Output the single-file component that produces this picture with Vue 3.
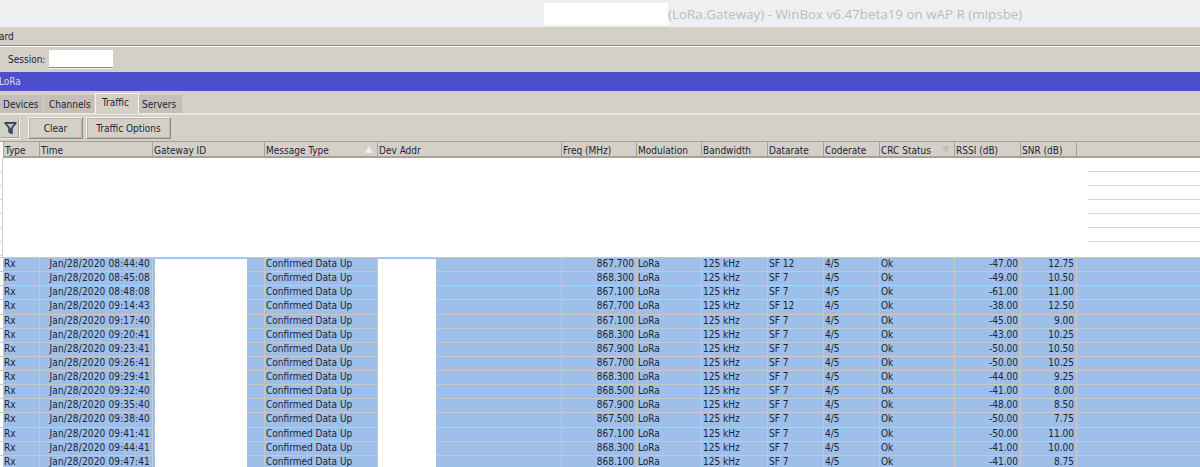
<script setup>
const columns = [
  { key: 'type', label: 'Type' },
  { key: 'time', label: 'Time', right: true },
  { key: 'gateway', label: 'Gateway ID' },
  { key: 'message', label: 'Message Type', sort: 'up' },
  { key: 'addr', label: 'Dev Addr' },
  { key: 'freq', label: 'Freq (MHz)', right: true },
  { key: 'modulation', label: 'Modulation' },
  { key: 'bandwidth', label: 'Bandwidth' },
  { key: 'datarate', label: 'Datarate' },
  { key: 'coderate', label: 'Coderate' },
  { key: 'crc', label: 'CRC Status', sort: 'down' },
  { key: 'rssi', label: 'RSSI (dB)', right: true },
  { key: 'snr', label: 'SNR (dB)', right: true },
]

const samples = [
  ['08:44:40', '867.700', 'SF 12', '-47.00', '12.75'],
  ['08:45:08', '868.300', 'SF 7', '-49.00', '10.50'],
  ['08:48:08', '867.100', 'SF 7', '-61.00', '11.00'],
  ['09:14:43', '867.700', 'SF 12', '-38.00', '12.50'],
  ['09:17:40', '867.100', 'SF 7', '-45.00', '9.00'],
  ['09:20:41', '868.300', 'SF 7', '-43.00', '10.25'],
  ['09:23:41', '867.900', 'SF 7', '-50.00', '10.50'],
  ['09:26:41', '867.700', 'SF 7', '-50.00', '10.25'],
  ['09:29:41', '868.300', 'SF 7', '-44.00', '9.25'],
  ['09:32:40', '868.500', 'SF 7', '-41.00', '8.00'],
  ['09:35:40', '867.900', 'SF 7', '-48.00', '8.50'],
  ['09:38:40', '867.500', 'SF 7', '-50.00', '7.75'],
  ['09:41:41', '867.100', 'SF 7', '-50.00', '11.00'],
  ['09:44:41', '868.300', 'SF 7', '-41.00', '10.00'],
  ['09:47:41', '868.100', 'SF 7', '-41.00', '8.75'],
]

const rows = samples.map(([time, freq, datarate, rssi, snr]) => ({
  type: 'Rx',
  time: `Jan/28/2020 ${time}`,
  gateway: '',
  message: 'Confirmed Data Up',
  addr: '',
  freq,
  modulation: 'LoRa',
  bandwidth: '125 kHz',
  datarate,
  coderate: '4/5',
  crc: 'Ok',
  rssi,
  snr,
}))

const tabs = ['Devices', 'Channels', 'Traffic', 'Servers']
</script>

<template>
  <div class="winbox">
    <header class="titlebar">
      <span class="titlebar__mask"></span>
      <span class="titlebar__text">(LoRa.Gateway) - WinBox v6.47beta19 on wAP R (mipsbe)</span>
    </header>

    <div class="menu-strip"><span>ard</span></div>

    <div class="session-bar">
      <label>Session:</label>
      <span class="session-bar__input"></span>
    </div>

    <div class="window-title"><span>LoRa</span></div>

    <nav class="tabs">
      <span
        v-for="tab in tabs"
        :key="tab"
        class="tab"
        :class="{ 'is-active': tab === 'Traffic' }"
      >{{ tab }}</span>
    </nav>

    <div class="toolbar">
      <span class="filter-btn">
        <svg width="13" height="14" viewBox="0 0 14 14">
          <path d="M1.2 1.5h11.6L8.6 6.6v6.2L5.4 11.2V6.6z" fill="#b9c0cb" stroke="#2f3f5a" stroke-width="1.7" stroke-linejoin="round" />
          <path d="M7 7v4.6" stroke="#2f3f5a" stroke-width="1" />
        </svg>
      </span>
      <button class="btn btn--clear">Clear</button>
      <button class="btn btn--options">Traffic Options</button>
    </div>

    <section class="grid">
      <div class="grid__row grid__head">
        <span class="cell-gutter"></span>
        <span v-for="col in columns" :key="col.key" class="head-cell">
          {{ col.label }}
          <i v-if="col.sort" class="sort" :class="`sort--${col.sort}`"></i>
        </span>
        <span class="head-cell"></span>
      </div>

      <div class="grid__empty">
        <div class="ticks">
          <i v-for="n in 7" :key="n"></i>
        </div>
        <div class="ghost-lines">
          <i v-for="n in 6" :key="n"></i>
        </div>
      </div>

      <div class="grid__body">
        <div v-for="(row, index) in rows" :key="index" class="grid__row grid__item">
          <span class="cell-gutter"></span>
          <span
            v-for="col in columns"
            :key="col.key"
            class="cell"
            :class="[`cell--${col.key}`, { 'cell--right': col.right }]"
          >{{ row[col.key] }}</span>
          <span class="cell"></span>
        </div>
        <span class="mask mask--gateway"></span>
        <span class="mask mask--addr"></span>
      </div>
    </section>
  </div>
</template>

<style scoped>
.winbox {
  width: 1200px;
  height: 467px;
  overflow: hidden;
  background: #d4d0c8;
  color: #1c2536;
  font-family: "DejaVu Sans Condensed", "DejaVu Sans", sans-serif;
  font-stretch: condensed;
  font-size: 10px;
}

.titlebar {
  display: flex;
  align-items: center;
  height: 27px;
  padding-left: 544px;
  box-sizing: border-box;
  background: #eeeff1;
}

.titlebar__mask {
  width: 124px;
  height: 22px;
  margin-top: 1px;
  background: #ffffff;
}

.titlebar__text {
  color: #b9bcc0;
  font-family: "Open Sans", sans-serif;
  font-stretch: normal;
  font-size: 13.4px;
  white-space: nowrap;
}

.menu-strip {
  display: flex;
  align-items: center;
  height: 19px;
  margin-left: -1px;
  box-sizing: border-box;
  border-bottom: 1px solid #8f8c86;
  box-shadow: 0 1px 0 #ffffff;
}

.session-bar {
  display: flex;
  align-items: center;
  gap: 4px;
  height: 26px;
  padding-left: 8px;
  box-sizing: border-box;
}

.session-bar label {
  width: 37px;
}

.session-bar__input {
  width: 64px;
  height: 17px;
  background: #ffffff;
  border-bottom: 1px solid #8f8c86;
  box-shadow: 0 1px 0 #f4f2ee;
}

.window-title {
  display: flex;
  align-items: center;
  height: 19px;
  background: #4d4fcc;
  color: #d8d8ee;
}

.window-title span {
  margin-left: -1px;
}

.tabs {
  display: flex;
  align-items: flex-end;
  height: 24px;
  box-sizing: border-box;
  border-bottom: 2px solid #e8e6e1;
}

.tab {
  display: flex;
  align-items: center;
  height: 18px;
  padding-top: 1px;
  box-sizing: border-box;
  border-right: 1px solid #d4d0c8;
  background: #c4c0b8;
}

.tab:nth-child(1) {
  width: 44px;
  padding-left: 3px;
}

.tab:nth-child(2) {
  width: 51px;
  padding-left: 5px;
}

.tab:nth-child(4) {
  width: 44px;
  padding-left: 3px;
}

.tab.is-active {
  width: 44px;
  height: 21px;
  margin-bottom: -1px;
  padding: 0 0 3px 6px;
  border: 1px solid #f4f2ee;
  border-bottom: 0;
  background: #d4d0c8;
}

.toolbar {
  display: flex;
  align-items: center;
  gap: 3px;
  height: 26px;
  box-sizing: border-box;
}

.filter-btn {
  display: flex;
  align-items: center;
  justify-content: center;
  width: 20px;
  height: 22px;
  margin-right: 5px;
  box-sizing: border-box;
  border: 1px solid;
  border-color: transparent #f4f2ee #f4f2ee transparent;
  box-shadow: inset -1px -1px 0 #a5a29b;
}

.btn {
  height: 22px;
  padding: 0;
  box-sizing: border-box;
  border: 1px solid;
  border-color: #f4f2ee #8f8c86 #8f8c86 #f4f2ee;
  outline: 1px solid #bab6ae;
  outline-offset: -2px;
  background: #d4d0c8;
  color: inherit;
  font: inherit;
}

.btn--clear {
  width: 55px;
}

.btn--options {
  width: 85px;
}

.grid {
  position: relative;
}

.grid__row {
  display: grid;
  grid-template-columns: 3px 36px 113px 112px 113px 184px 75px 65px 66px 56px 56px 75px 66px 56px 1fr;
}

.grid__head {
  height: 17px;
  box-sizing: border-box;
  border-top: 1px solid #a5a29b;
  border-bottom: 2px solid #a5a29b;
}

.head-cell {
  position: relative;
  padding-left: 1px;
  border-left: 1px solid #a5a29b;
  line-height: 17px;
  white-space: nowrap;
}

.sort {
  position: absolute;
  top: 4px;
  right: 4px;
  width: 0;
  height: 0;
  border-left: 4px solid transparent;
  border-right: 4px solid transparent;
}

.sort--up {
  border-bottom: 7px solid #efeeea;
}

.sort--down {
  border-top: 7px solid #c0bdb6;
}

.grid__empty {
  position: relative;
  height: 99px;
  background: #ffffff;
}

.ticks {
  display: flex;
  flex-direction: column;
  gap: 13px;
  width: 3px;
  height: 100%;
  padding-top: 13px;
  box-sizing: border-box;
  border-right: 1px solid #d4d0c8;
}

.ticks i {
  display: block;
  height: 1px;
  background: #dcdad5;
}

.ghost-lines {
  position: absolute;
  top: 13px;
  right: 0;
  display: flex;
  flex-direction: column;
  gap: 13px;
  width: 112px;
}

.ghost-lines i {
  display: block;
  height: 1px;
  background: #dcdad5;
}

.grid__body {
  position: relative;
}

.grid__item {
  height: 14.13px;
  box-sizing: border-box;
  border-top: 1px solid #c8c8c6;
  background: #9ebfe9;
}

.cell,
.cell-gutter {
  overflow: hidden;
  white-space: nowrap;
}

.cell {
  padding: 0 1px;
  border-left: 1px solid #c8c8c6;
  line-height: 12px;
}

.cell--type {
  padding-left: 0;
}

.cell--right {
  padding-right: 2px;
  text-align: right;
}

.cell--time {
  letter-spacing: 0.15px;
}

.cell-gutter {
  background: #ffffff;
}

.mask {
  position: absolute;
  top: 2px;
  bottom: 0;
  background: #ffffff;
}

.mask--gateway {
  left: 155px;
  width: 92px;
}

.mask--addr {
  left: 378px;
  width: 58px;
}
</style>

<style>
html,
body {
  background: #d4d0c8;
}
</style>
